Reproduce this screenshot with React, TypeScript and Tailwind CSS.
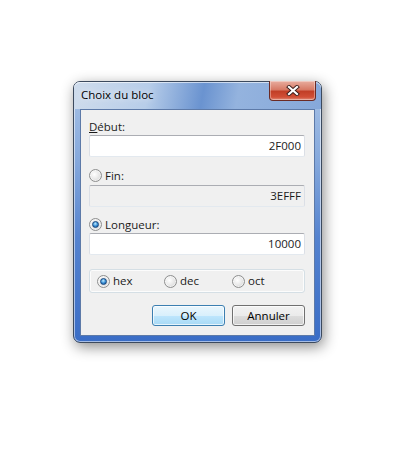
import React from 'react';

const font = { fontFamily: '"Open Sans", "Noto Sans", sans-serif' };

function Radio({ checked }: { checked?: boolean }) {
  return (
    <span className="flex h-[13px] w-[13px] shrink-0 items-center justify-center rounded-full border border-[#8e8f8f] bg-[radial-gradient(circle_at_40%_40%,#ffffff_0%,#e8e8e8_50%,#c4c4c4_100%)] shadow-[inset_0_0_0_1px_rgba(255,255,255,0.6)]">
      {checked && (
        <span className="h-[7px] w-[7px] rounded-full border border-[#17457c] bg-[radial-gradient(circle_at_45%_35%,#c2ecff_0%,#3d93d8_50%,#0d4c93_100%)]" />
      )}
    </span>
  );
}

function Field({ value, disabled }: { value: string; disabled?: boolean }) {
  return (
    <div
      className={`flex h-[22px] w-[216px] items-center justify-end rounded-[2px] border border-[#dbdfe6] border-t-[#abadb3] border-b-[#e3e9ef] pr-[3px] text-[11.5px] text-[#1b1b1b] ${
        disabled ? 'bg-[#f0f0f0]' : 'bg-white'
      }`}
    >
      {value}
    </div>
  );
}

function CloseButton() {
  return (
    <div className="absolute right-[5px] top-[-1px] flex h-[20px] w-[47px] items-center justify-center rounded-b-[4px] border border-t-0 border-[#6b2a24] bg-[linear-gradient(to_bottom,#e8ad9f_0%,#d77a66_45%,#c23f27_55%,#d14f36_85%,#e0907c_100%)] shadow-[inset_0_0_0_1px_rgba(255,255,255,0.35)]">
      <svg width="14" height="11" viewBox="0 0 14 11">
        <path d="M3 2 L11 9 M11 2 L3 9" stroke="#3b1d1a" strokeWidth="4" strokeLinecap="square" />
        <path d="M3 2 L11 9 M11 2 L3 9" stroke="#ffffff" strokeWidth="2.2" strokeLinecap="square" />
      </svg>
    </div>
  );
}

export default function App() {
  return (
    <div className="h-[449px] w-[407px] bg-white pl-[73px] pt-[81px]" style={font}>
      {/* Window */}
      <div className="relative flex h-[262px] w-[249px] flex-col rounded-[7px] border border-[#3c4a5e] bg-[linear-gradient(to_bottom,#a9c3e6_0%,#86a9dc_30%,#5583cf_60%,#3a6dc6_100%)] px-[6px] pb-[6px] shadow-[2px_4px_14px_rgba(0,0,0,0.45),inset_0_0_0_1px_rgba(255,255,255,0.55)]">
        {/* Title bar */}
        <div className="relative -mx-[6px] flex h-[27px] items-center rounded-t-[6px] bg-[linear-gradient(100deg,#cfdcec_0%,#b7cde9_30%,#6a93d0_52%,#94b3de_66%,#86a8da_100%)] px-[7px] pb-[1px] shadow-[inset_0_1px_0_rgba(255,255,255,0.6)]">
          <span className="text-[11.5px] text-black [text-shadow:0_0_7px_rgba(255,255,255,0.95)]">Choix du bloc</span>
          <CloseButton />
        </div>

        {/* Client */}
        <div className="flex flex-1 flex-col border border-[#5d7aa8] bg-[#f0f0f0] pl-[8px] pt-[9px] text-[11.5px] text-[#1b1b1b]">
          <div className="h-[15px] leading-[15px]">
            <span className="underline">D</span>ébut:
          </div>
          <div className="mt-[1px]">
            <Field value="2F000" />
          </div>

          <div className="mt-[11px] flex h-[15px] items-center gap-[3px] leading-[15px]">
            <Radio />
            <span>Fin:</span>
          </div>
          <div className="mt-[2px]">
            <Field value="3EFFF" disabled />
          </div>

          <div className="mt-[10px] flex h-[15px] items-center gap-[3px] leading-[15px]">
            <Radio checked />
            <span>Longueur:</span>
          </div>
          <div className="mt-[1px]">
            <Field value="10000" />
          </div>

          <div className="mt-[14px] flex h-[24px] w-[216px] items-center rounded-[3px] border border-[#d5dfe5] pl-[7px] shadow-[inset_0_0_0_1px_rgba(255,255,255,0.8)]">
            {['hex', 'dec', 'oct'].map((label, i) => (
              <div key={label} className={`flex items-center gap-[3px] ${i === 0 ? 'w-[67px]' : 'w-[68px]'}`}>
                <Radio checked={i === 0} />
                <span>{label}</span>
              </div>
            ))}
          </div>

          <div className="mt-[12px] flex w-[216px] justify-end gap-[7px]">
            <button className="flex h-[21px] w-[73px] items-center justify-center rounded-[3px] border border-[#3c7fb1] bg-[linear-gradient(to_bottom,#eaf6fd_0%,#d9f0fc_50%,#bee6fd_51%,#a7d9f5_100%)] text-[11.5px] text-black shadow-[inset_0_0_0_1px_rgba(255,255,255,0.7)]">
              OK
            </button>
            <button className="flex h-[21px] w-[73px] items-center justify-center rounded-[3px] border border-[#707070] bg-[linear-gradient(to_bottom,#f2f2f2_0%,#ebebeb_50%,#dddddd_51%,#cfcfcf_100%)] text-[11.5px] text-black shadow-[inset_0_0_0_1px_rgba(255,255,255,0.7)]">
              Annuler
            </button>
          </div>
        </div>
      </div>
    </div>
  );
}
